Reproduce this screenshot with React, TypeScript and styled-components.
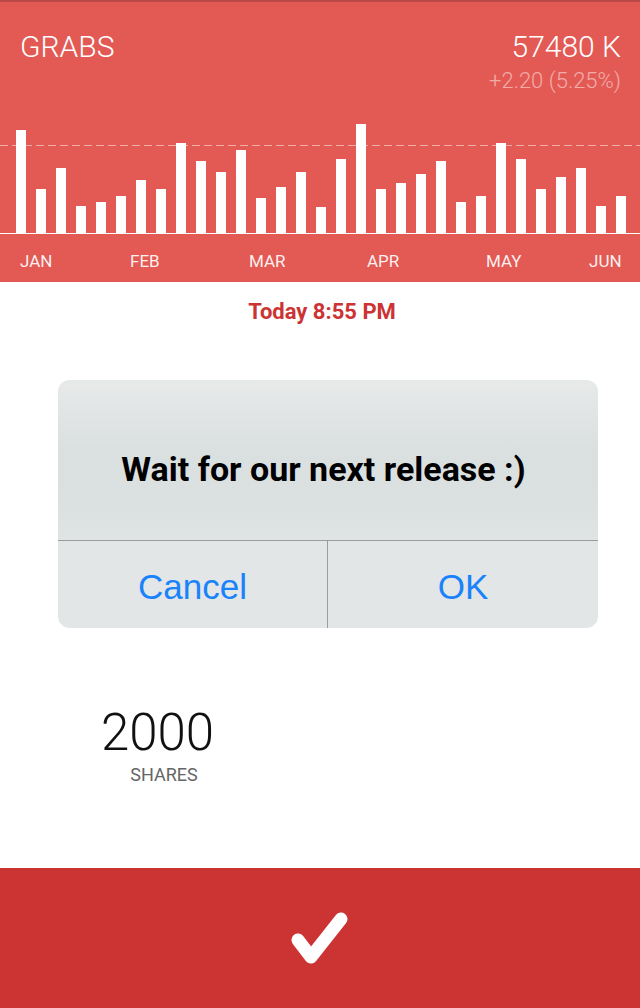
import React from 'react'
import styled, { createGlobalStyle } from 'styled-components';

const GlobalStyle = createGlobalStyle`
    html, body {
        margin: 0;
        padding: 0;
        background: #ffffff;
    }
    body {
        font-family: Roboto, "Liberation Sans", sans-serif;
    }
`

const bars = [103, 44, 65, 27, 31, 37, 53, 44, 90, 72, 61, 83, 35, 46, 61, 26,
    74, 109, 44, 50, 59, 72, 31, 37, 90, 74, 44, 56, 65, 27, 37];

const months = [
    { name: 'JAN', x: 20 },
    { name: 'FEB', x: 130 },
    { name: 'MAR', x: 249 },
    { name: 'APR', x: 367 },
    { name: 'MAY', x: 486 },
    { name: 'JUN', x: 589 },
];

const Page = styled.div`
    width: 640px;
    height: 1008px;
    display: flex;
    flex-direction: column;
    overflow: hidden;
`

const Header = styled.div`
    height: 282px;
    background-color: #e35a55;
    border-top: 2px solid #b94945;
    box-sizing: border-box;
    display: flex;
    flex-direction: column;
    color: white;
`

const TopRow = styled.div`
    display: flex;
    justify-content: space-between;
    padding: 27px 19px 0 20px;
`

const Title = styled.div`
    font-size: 30px;
    font-weight: 300;
    line-height: 36px;
`

const Quote = styled.div`
    display: flex;
    flex-direction: column;
    align-items: flex-end;
`

const Price = styled.div`
    font-size: 30px;
    font-weight: 300;
    line-height: 36px;
`

const Change = styled.div`
    font-size: 22px;
    font-weight: 300;
    line-height: 26px;
    color: rgba(255, 255, 255, 0.5);
    margin-top: 3px;
`

const Chart = styled.svg`
    display: block;
    margin-top: 16px;
`

const Months = styled.div`
    position: relative;
    height: 30px;
    margin-top: 16px;
`

const Month = styled.span`
    position: absolute;
    top: 0;
    font-size: 17px;
    line-height: 22px;
    color: rgba(255, 255, 255, 0.92);
`

const Content = styled.div`
    flex: 1;
    display: flex;
    flex-direction: column;
    align-items: center;
`

const Time = styled.div`
    margin-top: 17px;
    margin-left: 4px;
    font-size: 22px;
    font-weight: 700;
    line-height: 26px;
    color: #cc3333;
`

const Dialog = styled.div`
    align-self: flex-start;
    margin: 55px 0 0 58px;
    width: 540px;
    border-radius: 12px;
    overflow: hidden;
    background: #e2e6e6;
`

const Message = styled.div`
    height: 161px;
    display: flex;
    align-items: center;
    justify-content: center;
    font-size: 34px;
    font-weight: 700;
    color: #000;
    padding: 18px 9px 0 0;
    box-sizing: border-box;
    background: linear-gradient(#e8eaea 0%, #dadfe0 45%, #dbe0e0 75%, #e0e4e4 100%);
    border-bottom: 1px solid #9a9d9e;
`

const Buttons = styled.div`
    display: grid;
    grid-template-columns: 270px 1fr;
    height: 87px;
`

const DialogButton = styled.button<{ $divider?: boolean }>`
    border: none;
    background: transparent;
    font-family: "Liberation Sans", Arial, sans-serif;
    font-size: 35px;
    color: #1a82fb;
    padding: 4px 0 0 0;
    border-right: ${p => p.$divider ? '1px solid #9a9d9e' : 'none'};
`

const Stat = styled.div`
    align-self: flex-start;
    margin-left: 100px;
    margin-top: 77px;
    display: flex;
    flex-direction: column;
    align-items: center;
    width: 128px;
`

const StatValue = styled.div`
    font-size: 51px;
    font-weight: 300;
    line-height: 56px;
    color: #111;
    padding-right: 13px;
`

const StatLabel = styled.div`
    font-size: 18px;
    line-height: 22px;
    color: #666;
    margin-top: 3px;
`

const Footer = styled.div`
    height: 140px;
    background: #cc3333;
    display: flex;
    align-items: center;
    justify-content: center;
`

const Check = styled.svg`
    margin-top: 4px;
`

const CHART_H = 124;
const BASE = 123;

export default function App() {
    return (
        <Page>
            <GlobalStyle />
            <Header>
                <TopRow>
                    <Title>GRABS</Title>
                    <Quote>
                        <Price>57480 K</Price>
                        <Change>+2.20 (5.25%)</Change>
                    </Quote>
                </TopRow>
                <Chart width="640" height={CHART_H} viewBox={`0 0 640 ${CHART_H}`}>
                    {bars.map((h, i) => (
                        <rect key={i} x={16 + i * 20} y={BASE - h} width="10" height={h} fill="#fff" />
                    ))}
                    <line x1="0" y1="35.5" x2="640" y2="35.5" stroke="rgba(255,255,255,0.5)" strokeWidth="1" strokeDasharray="8 4" />
                    <line x1="0" y1={BASE + 0.5} x2="640" y2={BASE + 0.5} stroke="#fff" strokeWidth="1" />
                </Chart>
                <Months>
                    {months.map(m => (
                        <Month key={m.name} style={{ left: m.x }}>{m.name}</Month>
                    ))}
                </Months>
            </Header>
            <Content>
                <Time>Today 8:55 PM</Time>
                <Dialog>
                    <Message>Wait for our next release :)</Message>
                    <Buttons>
                        <DialogButton $divider>Cancel</DialogButton>
                        <DialogButton>OK</DialogButton>
                    </Buttons>
                </Dialog>
                <Stat>
                    <StatValue>2000</StatValue>
                    <StatLabel>SHARES</StatLabel>
                </Stat>
            </Content>
            <Footer>
                <Check width="60" height="60" viewBox="0 0 60 60">
                    <path d="M8 30 L21 47 L51 9" fill="none" stroke="#fff" strokeWidth="13" strokeLinecap="round" strokeLinejoin="round" />
                </Check>
            </Footer>
        </Page>
    );
}
